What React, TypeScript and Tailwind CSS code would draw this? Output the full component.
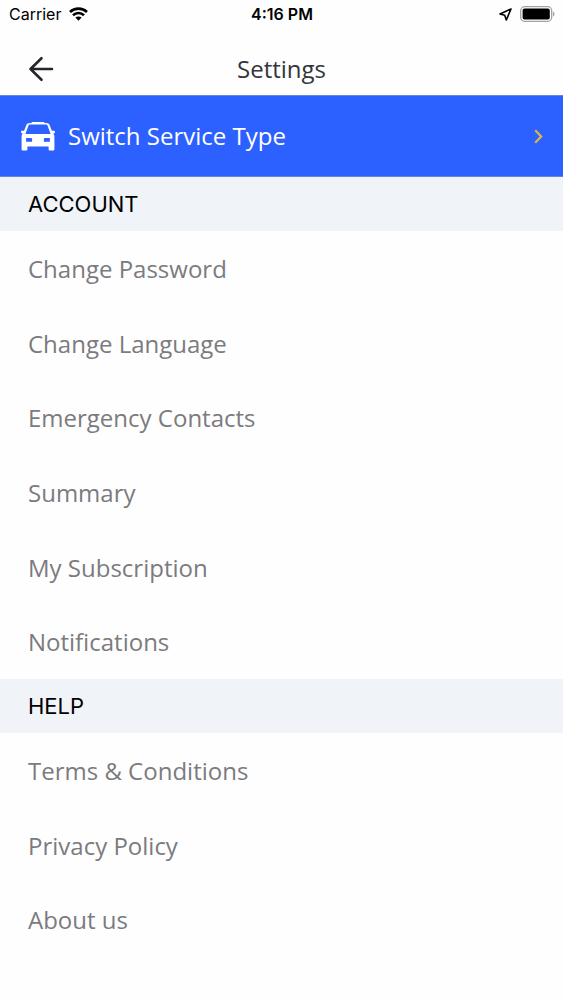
const accountItems = [
  "Change Password",
  "Change Language",
  "Emergency Contacts",
  "Summary",
  "My Subscription",
  "Notifications",
];

const helpItems = ["Terms & Conditions", "Privacy Policy", "About us"];

function StatusBar() {
  return (
    <div className="grid grid-cols-3 items-center h-7 pl-[9px] pr-2 font-['Inter',sans-serif] text-[16px] leading-5 text-black">
      <div className="flex items-center gap-2">
        <span>Carrier</span>
        <svg className="w-[19px] h-[14px]" viewBox="0 0 19 14" fill="none" stroke="currentColor" strokeWidth="2.6">
          <path d="M1 5C5.8 0.5 13.2 0.5 18 5" />
          <path d="M4 8.2c3.1-2.9 7.9-2.9 11 0" />
          <path d="M6.4 10.6c1.8-1.6 4.4-1.6 6.2 0L9.5 13.8z" fill="currentColor" stroke="none" />
        </svg>
      </div>
      <div className="text-center font-semibold whitespace-nowrap">4:16 PM</div>
      <div className="flex items-center justify-end gap-2">
        <svg className="w-[13px] h-[13px]" viewBox="0 0 13 13" fill="none" stroke="currentColor" strokeWidth="1.6" strokeLinejoin="round">
          <path d="M12 1L1 6l4.700 1.300L7.300 12z" />
        </svg>
        <svg className="w-[35px] h-[16px]" viewBox="0 0 35 16" fill="none">
          <rect x="0.7" y="0.7" width="31" height="14.6" rx="4" stroke="#a3a3a3" strokeWidth="1.3" />
          <rect x="2.6" y="2.6" width="27.2" height="10.8" rx="2" fill="#000" />
          <path d="M33 5.5c2 .8 2 4.2 0 5z" fill="#a3a3a3" />
        </svg>
      </div>
    </div>
  );
}

function CarIcon() {
  return (
    <svg className="w-[34px] h-[29px]" viewBox="0 0 34 29" fill="currentColor">
      <path
        fillRule="evenodd"
        d="M10.5 1C10.5.4 11 0 11.7 0h10.600c.7 0 1.200.4 1.200 1H25c1.800 0 3.200.8 3.800 2.400L30.900 8.800h1.700c.8 0 1.400.5 1.400 1.300s-.6 1.400-1.400 1.400h-.5c.8.8 1.300 1.700 1.300 2.900v12.800c0 .8-.6 1.400-1.400 1.400h-3c-.8 0-1.400-.6-1.400-1.400V24.600H6.400v2.600c0 .8-.6 1.400-1.400 1.400H2c-.8 0-1.400-.6-1.400-1.400V14.400c0-1.200.5-2.100 1.300-2.900h-.5C.6 11.500 0 10.900 0 10.100s.6-1.300 1.400-1.300h1.700L5.200 3.400C5.800 1.800 7.200 1 9 1zM9.300 2.500c-1 0-1.600.5-1.900 1.300L4.500 11.800c0 .2.100.3.400.3h24.200c.3 0 .4-.1.400-.3L26.600 3.800c-.3-.8-.9-1.300-1.900-1.300zM5.100 16.100v3.700h6v-2.500c0-.7-.5-1.200-1.200-1.200zM28.900 16.100v3.700h-6v-2.500c0-.7.5-1.200 1.200-1.200z"
      />
    </svg>
  );
}

function SettingsSection({ title, items }: { title: string; items: string[] }) {
  return (
    <section>
      <h2 className="flex items-center h-[54px] px-7 bg-[#f0f4f9] font-['Inter',sans-serif] text-[22px] text-black">
        {title}
      </h2>
      <ul>
        {items.map((item) => (
          <li key={item} className="h-[75px] nth-[3n]:h-[74px]">
            <button type="button" className="flex items-center w-full h-full px-7 text-left text-[24px] text-[#7b7b7e]">
              {item}
            </button>
          </li>
        ))}
      </ul>
    </section>
  );
}

export default function App() {
  return (
    <div className="min-h-screen bg-[#fefefe] font-['Open_Sans',sans-serif]">
      <StatusBar />
      <header className="grid grid-cols-[1fr_auto_1fr] items-center h-[67px] px-7 pt-3.5">
        <button type="button" aria-label="Back" className="w-[26px] text-[#26262a]">
          <svg className="w-[26px] h-[26px]" viewBox="0 0 26 26" fill="none" stroke="currentColor" strokeWidth="2.6" strokeLinecap="round" strokeLinejoin="round">
            <path d="M24 13H2.5M13.5 2.2L2.5 13l11 10.8" />
          </svg>
        </button>
        <h1 className="text-[24px] leading-8 font-medium text-[#35353a]">Settings</h1>
      </header>

      <main>
        <button type="button" className="flex items-center gap-[13px] w-full h-[82px] pl-[21px] pr-5 border-y border-[#6485db] bg-[#2c60ff] text-white">
          <CarIcon />
          <span className="text-[24px]">Switch Service Type</span>
          <svg className="ml-auto w-[9px] h-[15px]" viewBox="0 0 9 15" fill="none" stroke="#dfb64c" strokeWidth="2.2">
            <path d="M1.2 1.2l6 6.3-6 6.3" />
          </svg>
        </button>
        <SettingsSection title="ACCOUNT" items={accountItems} />
        <SettingsSection title="HELP" items={helpItems} />
      </main>
    </div>
  );
}
